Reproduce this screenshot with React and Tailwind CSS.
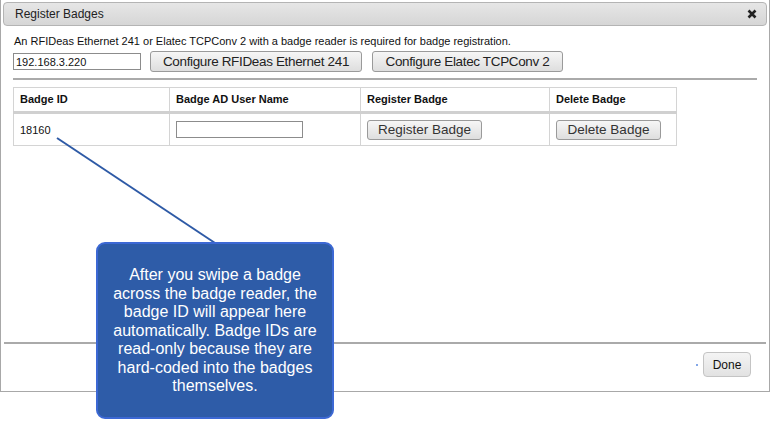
export default function App() {
  const f = { fontFamily: '"Liberation Sans", Arial, sans-serif' };
  const btn =
    "h-[21px] rounded-[3px] border border-[#9a9a9a] bg-gradient-to-b from-[#f6f6f6] to-[#dedede] text-[13.5px] tracking-[-0.35px] leading-none text-[#222] whitespace-nowrap px-0";
  return (
    <div className="relative w-[771px] h-[430px] bg-white overflow-hidden" style={f}>
      <div className="w-[770px] h-[392px] border border-[#a8a8a8] border-t-0 flex flex-col p-[2px] pt-[2px]">
        <div className="h-[24px] shrink-0 rounded-[4px] border border-[#b4b4b4] bg-gradient-to-b from-[#e6e6e6] to-[#d6d6d6] flex items-center justify-between pl-[11px] pr-[9px]">
          <span className="text-[12px] text-[#222]">Register Badges</span>
          <svg width="10" height="10" viewBox="0 0 10 10">
            <path d="M1.5 1.5 L8.5 8.5 M8.5 1.5 L1.5 8.5" stroke="#222" strokeWidth="2.6" strokeLinecap="butt" />
          </svg>
        </div>
        <div className="flex-1 flex flex-col pl-[10px] pr-[11px] pt-[9px]">
          <div className="text-[11px] text-[#111] leading-[13px] pl-[1px]">
            An RFIDeas Ethernet 241 or Elatec TCPConv 2 with a badge reader is required for badge registration.
          </div>
          <div className="flex items-center mt-[3px] gap-[9px]">
            <input
              readOnly
              value="192.168.3.220"
              className="w-[128px] h-[17px] border border-[#8c8c8c] text-[11px] px-[2px] text-[#111] outline-none"
              style={f}
            />
            <button className={btn + " w-[212px]"} style={f}>Configure RFIDeas Ethernet 241</button>
            <button className={btn + " w-[191px] ml-[1px]"} style={f}>Configure Elatec TCPConv 2</button>
          </div>
          <div className="mt-[6px] h-[2px] w-[744px] bg-[#aaaaaa]" />
          <table className="mt-[7px] border-collapse text-[11px] text-[#111] w-[664px]">
            <thead>
              <tr className="h-[25px]">
                <th className="w-[156px] border border-[#d4d4d4] border-b-[3px] border-b-[#d0d0d0] text-left font-bold pl-[6px]">Badge ID</th>
                <th className="w-[191px] border border-[#d4d4d4] border-b-[3px] border-b-[#d0d0d0] text-left font-bold pl-[6px]">Badge AD User Name</th>
                <th className="w-[189px] border border-[#d4d4d4] border-b-[3px] border-b-[#d0d0d0] text-left font-bold pl-[6px]">Register Badge</th>
                <th className="w-[127px] border border-[#d4d4d4] border-b-[3px] border-b-[#d0d0d0] text-left font-bold pl-[6px]">Delete Badge</th>
              </tr>
            </thead>
            <tbody>
              <tr className="h-[33px]">
                <td className="border border-[#d4d4d4] pl-[6px] pt-[2px]">18160</td>
                <td className="border border-[#d4d4d4] pl-[6px]">
                  <input className="w-[127px] h-[17px] border border-[#8c8c8c] outline-none block" />
                </td>
                <td className="border border-[#d4d4d4] pl-[6px]">
                  <button className="h-[20px] w-[115px] rounded-[3px] border border-[#9a9a9a] bg-gradient-to-b from-[#f6f6f6] to-[#dedede] text-[13.5px] leading-none text-[#333] block whitespace-nowrap" style={f}>Register Badge</button>
                </td>
                <td className="border border-[#d4d4d4] pl-[6px]">
                  <button className="h-[20px] w-[105px] rounded-[3px] border border-[#9a9a9a] bg-gradient-to-b from-[#f6f6f6] to-[#dedede] text-[13.5px] leading-none text-[#333] block whitespace-nowrap" style={f}>Delete Badge</button>
                </td>
              </tr>
            </tbody>
          </table>
        </div>
        <div className="h-[2px] bg-[#aaaaaa] mx-[1px]" />
        <div className="h-[45px] shrink-0 flex items-start justify-end pr-[16px] pt-[8px]">
          <div className="w-[2px] h-[2px] rounded-full bg-[#5a8ae0] mt-[12px] mr-[5px]" />
          <button className="h-[25px] w-[48px] rounded-[4px] border border-[#c4c4c4] bg-gradient-to-b from-[#f4f4f4] to-[#e2e2e2] text-[12px] text-[#111]" style={f}>Done</button>
        </div>
      </div>

      <svg className="absolute left-0 top-0 pointer-events-none" width="771" height="430">
        <line x1="57" y1="138" x2="215" y2="243" stroke="#2e5aa6" strokeWidth="2" />
      </svg>
      <div className="absolute left-[96px] top-[242px] w-[238px] h-[177px] rounded-[9px] border-2 border-[#3c68d4] bg-[#2e5ca8] text-white text-[16px] leading-[18.5px] text-center pt-[22px] px-[8px]" style={f}>
        After you swipe a badge across the badge reader, the badge ID will appear here automatically. Badge IDs are read-only because they are hard-coded into the badges themselves.
      </div>
    </div>
  );
}
